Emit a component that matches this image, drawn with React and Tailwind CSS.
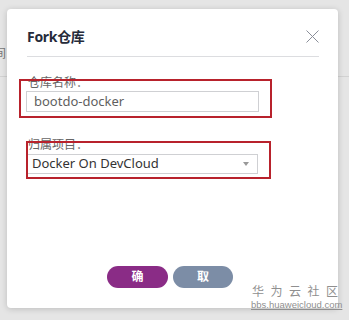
const font = { fontFamily: '"Noto Sans", "Noto Sans CJK SC", sans-serif' }

function CloseIcon() {
  return (
    <svg width="13" height="13" viewBox="0 0 13 13" className="text-[#8a8e99]">
      <path d="M0.5 0.5 L12.5 12.5 M12.5 0.5 L0.5 12.5" stroke="currentColor" strokeWidth="1" fill="none" />
    </svg>
  )
}

export default function App() {
  return (
    <div className="relative w-[349px] h-[320px] overflow-hidden bg-[#e5e5e5]" style={font}>
      {/* page behind the dialog */}
      <div className="absolute left-0 right-0 top-[76px] h-px bg-[#d2d2d2]" />
      <span className="absolute left-[-6px] top-[46px] text-[12px] leading-[16px] text-[#777]">间</span>

      <div className="relative ml-[7px] mt-[9px] w-[331px] h-[299px] rounded-[4px] bg-white shadow-[0_1px_6px_rgba(0,0,0,0.18)] flex flex-col">
        <div className="ml-[20px] mr-[19px] h-[48px] pt-[8px] border-b border-[#dcdde0] flex items-center justify-between">
          <span className="text-[14px] font-bold text-[#252b3a] tracking-[-0.3px]">Fork仓库</span>
          <CloseIcon />
        </div>

        <div className="pl-[19px] pr-[80px] flex flex-col">
          <label className="mt-[18px] pl-[2px] text-[12px] leading-[16px] text-[#666]">仓库名称：</label>
          <div className="h-[21px] w-[233px] border border-[#cfd0d3] flex items-center pl-[7px] text-[13px] text-[#5f5f5f]">
            bootdo-docker
          </div>

          <label className="mt-[25px] pl-[2px] text-[12px] leading-[16px] text-[#666]">归属项目：</label>
          <div className="mt-[1px] h-[20px] w-[232px] border border-[#cfd0d3] flex items-center justify-between pl-[5px] pr-[8px] text-[13px] text-[#333]">
            <span>Docker On DevCloud</span>
            <span className="w-0 h-0 border-l-[3px] border-r-[3px] border-t-[4px] border-l-transparent border-r-transparent border-t-[#999]" />
          </div>
        </div>

        <div className="mt-auto pb-[20px] pl-[100px] flex gap-[5px]">
          <button className="w-[61px] h-[22px] rounded-full bg-[#8a2c86] text-white text-[12px] font-bold">确</button>
          <button className="w-[60px] h-[22px] rounded-full bg-[#7c8da6] text-white text-[12px] font-bold">取</button>
        </div>

        {/* annotation boxes */}
        <div className="absolute left-[12px] top-[70px] w-[253px] h-[39px] border-2 border-[#b8222c]" />
        <div className="absolute left-[19px] top-[132px] w-[245px] h-[38px] border-2 border-[#b8222c]" />
      </div>

      {/* watermark */}
      <div className="absolute left-[251px] top-[284px] w-[88px] flex flex-col">
        <div className="flex justify-between text-[12px] leading-[15px] text-[#8f8f8f] px-[1px]">
          <span>华</span><span>为</span><span>云</span><span>社</span><span>区</span>
        </div>
        <span className="mt-[1px] text-[9.5px] leading-[10px] text-[#8f8f8f] underline whitespace-nowrap" style={{ fontFamily: '"Liberation Sans", sans-serif' }}>bbs.huaweicloud.com</span>
      </div>
    </div>
  )
}
